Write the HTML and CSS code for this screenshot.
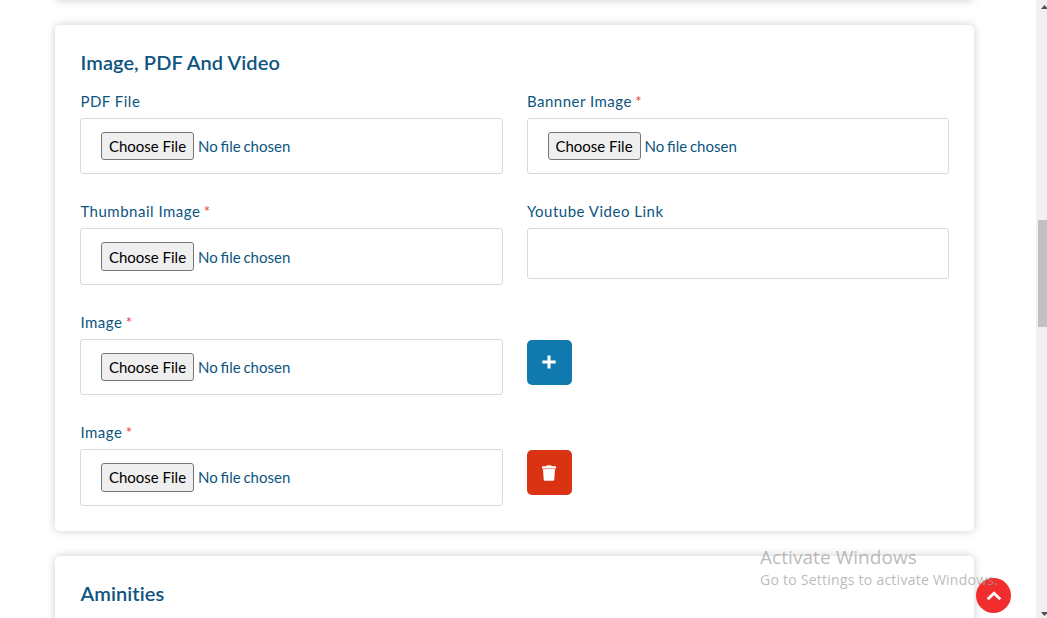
FILE: index.html
```html
<!DOCTYPE html>
<html lang="en">
<head>
<meta charset="utf-8">
<title>Image, PDF And Video</title>
<link rel="stylesheet" href="styles.css">
</head>
<body>
<div class="page">
  <main class="content">
    <section class="card card-previous"></section>
    <section class="card card-media">
      <h2 class="card-title">Image, PDF And Video</h2>
      <form class="fields">
        <div class="field">
          <label class="label">PDF File</label>
          <div class="control file"><button type="button" class="choose">Choose File</button><span class="file-name">No file chosen</span></div>
        </div>
        <div class="field">
          <label class="label">Bannner Image <span class="required">*</span></label>
          <div class="control file"><button type="button" class="choose">Choose File</button><span class="file-name">No file chosen</span></div>
        </div>
        <div class="field">
          <label class="label">Thumbnail Image <span class="required">*</span></label>
          <div class="control file"><button type="button" class="choose">Choose File</button><span class="file-name">No file chosen</span></div>
        </div>
        <div class="field">
          <label class="label">Youtube Video Link</label>
          <input class="control text" type="text" aria-label="Youtube Video Link">
        </div>
        <div class="field">
          <label class="label">Image <span class="required">*</span></label>
          <div class="control file"><button type="button" class="choose">Choose File</button><span class="file-name">No file chosen</span></div>
        </div>
        <div class="field action">
          <button type="button" class="square add" aria-label="Add image">
            <svg width="14" height="14" viewBox="0 0 14 14"><path d="M7 .5v13M.3 7h13.400" stroke="#fff" stroke-width="3"/></svg>
          </button>
        </div>
        <div class="field">
          <label class="label">Image <span class="required">*</span></label>
          <div class="control file"><button type="button" class="choose">Choose File</button><span class="file-name">No file chosen</span></div>
        </div>
        <div class="field action">
          <button type="button" class="square remove" aria-label="Delete image">
            <svg width="14" height="16" viewBox="0 0 14 16"><path fill="#fff" d="M.5 1.200h4L5 .3h4l.5.9h4q.5 0 .5.5v1.800H0V1.700q0-.5.5-.5zM1 4h12l-.7 10.500q-.1 1.300-1.400 1.300H3.100q-1.300 0-1.400-1.300z"/></svg>
          </button>
        </div>
      </form>
    </section>
    <section class="card card-next">
      <h2 class="card-title">Aminities</h2>
    </section>
  </main>
  <div class="scrollbar">
    <svg class="arrow" width="7" height="4" viewBox="0 0 7 4"><path fill="#505050" d="M0 4h7L3.500 0z"/></svg>
    <div class="thumb"></div>
    <svg class="arrow" width="7" height="4" viewBox="0 0 7 4"><path fill="#505050" d="M0 0h7L3.500 4z"/></svg>
  </div>
</div>
<a class="to-top" aria-label="Back to top">
  <svg width="16" height="10" viewBox="0 0 16 10"><path d="M1.700 8.300 8 2.200l6.300 6.100" fill="none" stroke="#fff" stroke-width="2.800"/></svg>
</a>
<div class="watermark">
  <div class="watermark-title">Activate Windows</div>
  <div class="watermark-text">Go to Settings to activate Windows.</div>
</div>
</body>
</html>
```

FILE: styles.css
```css
* { box-sizing: border-box; }
body {
  margin: 0;
  overflow: hidden;
  background: #fff;
  color: #0d557f;
  font-family: Lato, sans-serif;
  font-size: 15px;
}
.page { display: flex; height: 618px; }
.content {
  flex: 1;
  display: flex;
  flex-direction: column;
  gap: 25px;
  padding: 0 62px 0 55px;
  overflow: hidden;
}
.card {
  flex: none;
  padding: 25px 25px 0;
  border-radius: 5px;
  background: #fff;
  box-shadow: 0 0 10px rgba(0, 0, 0, .2);
}
.card-previous { height: 20px; margin-top: -20px; padding: 0; }
.card-media { height: 506px; }
.card-next { height: 120px; }
.card-title {
  margin: 0;
  padding-left: .5px;
  font-size: 20px;
  line-height: 25px;
  font-weight: 600;
  letter-spacing: .08px;
}
.fields {
  display: grid;
  grid-template-columns: 1fr 1fr;
  grid-auto-rows: 110.400px;
  column-gap: 24px;
  padding-top: 14px;
}
.label {
  display: block;
  height: 29px;
  padding-left: .4px;
  line-height: 24px;
  letter-spacing: .5px;
}
.required { margin-left: -1px; color: #e8403a; }
.control {
  display: flex;
  align-items: center;
  width: 100%;
  border: 1px solid #dadada;
  border-radius: 3px;
  background: #fff;
}
.file { height: 56.400px; padding-left: 20px; gap: 4px; }
.file-name { word-spacing: -1px; }
.text { height: 51px; padding: 0 20px; font: inherit; }
.choose {
  width: 93px;
  height: 28.500px;
  padding: 0;
  border: 1px solid #767676;
  border-radius: 3px;
  background: #efefef;
  color: #000;
  font: inherit;
  white-space: nowrap;
}
.action { padding-top: 30px; }
.square {
  display: flex;
  align-items: center;
  justify-content: center;
  width: 45px;
  height: 45px;
  padding: 0;
  border: 0;
  border-radius: 5px;
}
.add { background: #107aaf; }
.remove { background: #d93314; }
.scrollbar {
  flex: none;
  width: 11px;
  display: flex;
  flex-direction: column;
  align-items: flex-end;
  padding: 5px 0 2px 2px;
  background: #f0f0f0;
}
.scrollbar .arrow { margin-right: -1px; }
.thumb {
  width: 9px;
  height: 107px;
  margin: 211px 0 auto;
  background: #c1c1c1;
}
.to-top {
  position: absolute;
  left: 976px;
  top: 578px;
  display: flex;
  align-items: center;
  justify-content: center;
  width: 35px;
  height: 35px;
  border-radius: 50%;
  background: #f22d2e;
}
.watermark {
  position: absolute;
  left: 760px;
  top: 544px;
  color: rgba(160, 160, 160, .72);
  font-family: "Open Sans", sans-serif;
  white-space: nowrap;
}
.watermark-title { font-size: 19px; line-height: 26px; letter-spacing: .06px; }
.watermark-text { font-size: 14px; line-height: 20px; letter-spacing: .25px; }
```
